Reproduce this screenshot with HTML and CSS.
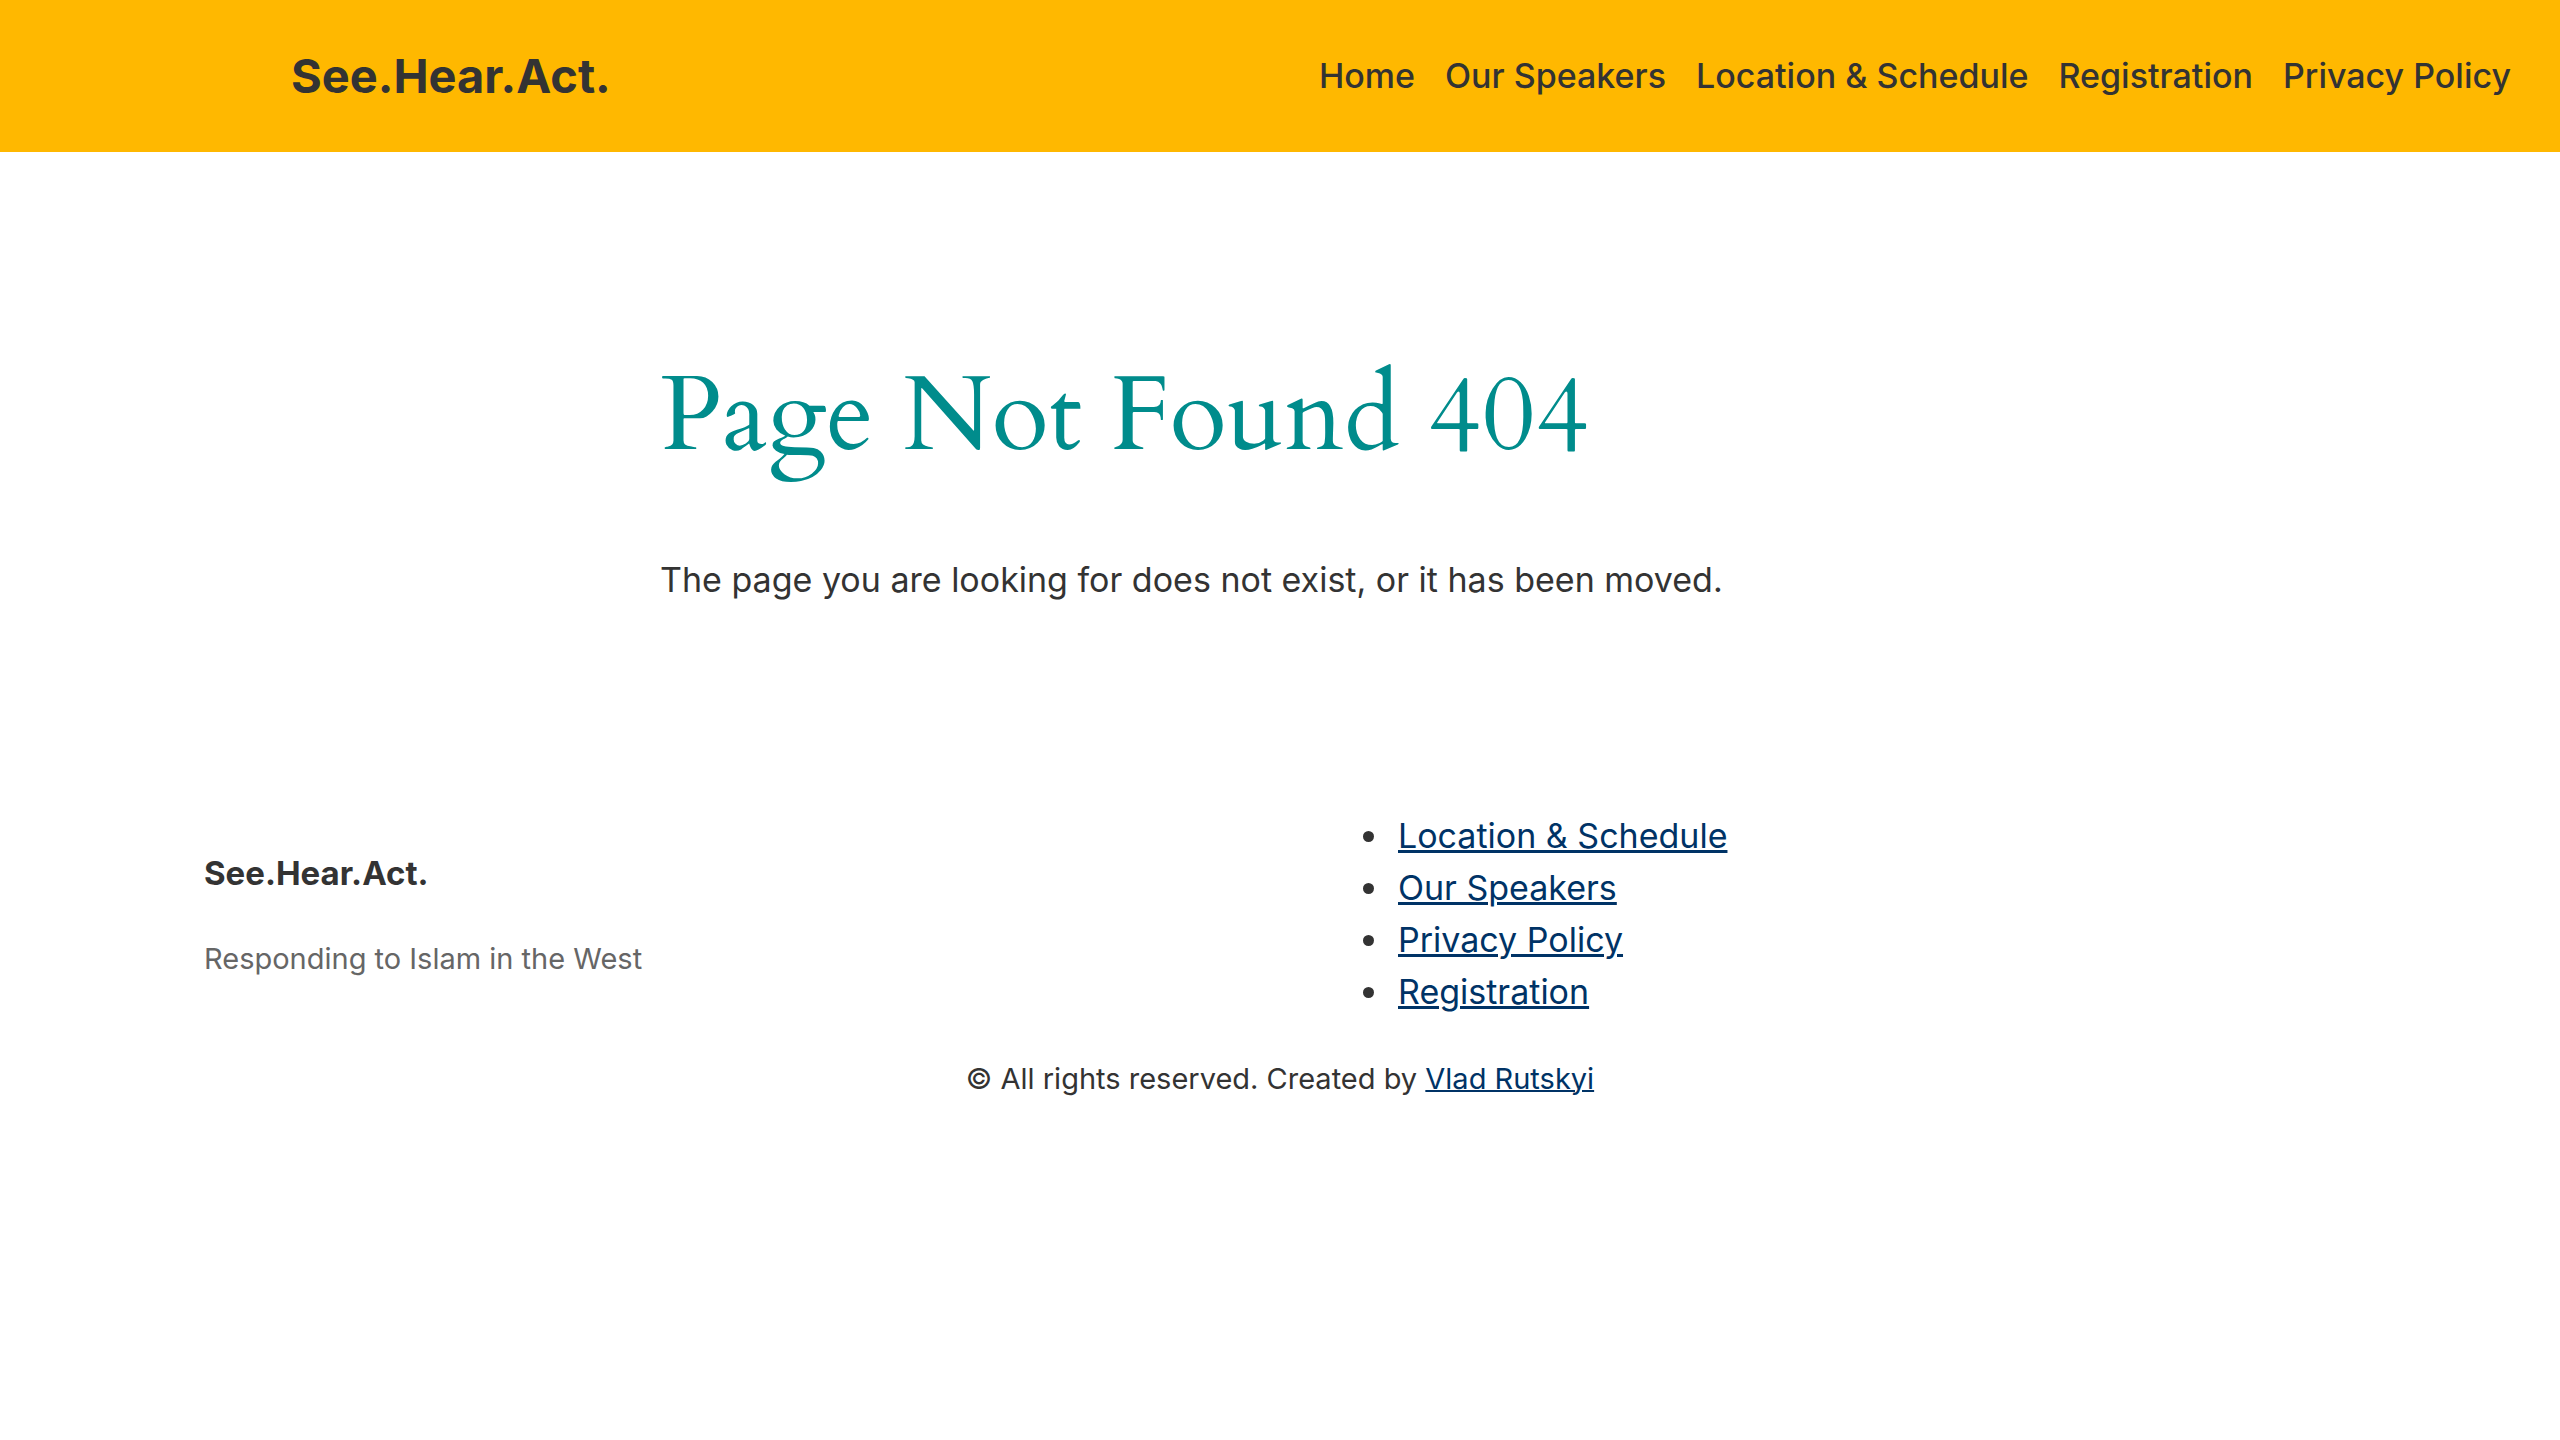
FILE: index.html
```html
<!DOCTYPE html>
<html lang="en">
<head>
<meta charset="utf-8">
<meta name="viewport" content="width=device-width, initial-scale=1">
<title>Page Not Found – See.Hear.Act.</title>
<link rel="stylesheet" href="styles.css">
</head>
<body>
<header class="site-header">
  <a class="brand" href="#">See.Hear.Act.</a>
  <nav class="main-nav" aria-label="Main">
    <a href="#">Home</a>
    <a href="#">Our Speakers</a>
    <a href="#">Location &amp; Schedule</a>
    <a href="#">Registration</a>
    <a href="#">Privacy Policy</a>
  </nav>
</header>
<main class="content">
  <h1 class="title">Page Not Found 404</h1>
  <p class="message">The page you are looking for does not exist, or it has been moved.</p>
</main>
<footer class="site-footer">
  <div class="footer-columns">
    <div class="footer-about">
      <a class="footer-brand" href="#">See.Hear.Act.</a>
      <p class="tagline">Responding to Islam in the West</p>
    </div>
    <ul class="footer-links">
      <li><a href="#">Location &amp; Schedule</a></li>
      <li><a href="#">Our Speakers</a></li>
      <li><a href="#">Privacy Policy</a></li>
      <li><a href="#">Registration</a></li>
    </ul>
  </div>
  <p class="copyright">© All rights reserved. Created by <a href="#">Vlad Rutskyi</a></p>
</footer>
</body>
</html>
```
FILE: styles.css
```css
* {
  box-sizing: border-box;
}

body {
  margin: 0;
  background: #fff;
  color: #333;
  font-family: Inter, sans-serif;
  font-size: 34px;
  line-height: 52px;
}

h1,
p,
ul {
  margin: 0;
}

.site-header {
  display: flex;
  align-items: center;
  justify-content: space-between;
  padding: 40px 49px 40px 291px;
  background: #ffb800;
}

.site-header a {
  color: #333;
  text-decoration: none;
}

.brand {
  font-size: 47px;
  line-height: 72px;
  font-weight: 700;
}

.main-nav {
  display: flex;
  gap: 30px;
  font-weight: 500;
}

.content {
  max-width: 1240px;
  margin: 0 auto;
  padding: 200px 0;
}

.title {
  margin-bottom: 74px;
  color: #008c8c;
  font-family: Cardo, "EB Garamond", "Liberation Serif", serif;
  font-size: 105px;
  line-height: 128px;
  font-weight: 400;
}

.site-footer {
  padding: 4px 204px;
}

.footer-columns {
  display: grid;
  grid-template-columns: 1fr 1fr;
  column-gap: 48px;
  align-items: center;
}

.footer-about {
  padding-top: 4px;
}

.footer-brand {
  color: #333;
  font-size: 33px;
  font-weight: 700;
  text-decoration: none;
}

.tagline {
  margin-top: 34px;
  color: #666;
  font-size: 29px;
  line-height: 52px;
}

.footer-links {
  padding-left: 88px;
}

.footer-links li {
  padding-left: 6px;
}

.footer-links a,
.copyright a {
  color: #003366;
  text-decoration-thickness: 2px;
}

.footer-links a {
  text-decoration-thickness: 3px;
}

.copyright {
  margin-top: 35px;
  font-size: 29px;
  line-height: 52px;
  text-align: center;
}
```
